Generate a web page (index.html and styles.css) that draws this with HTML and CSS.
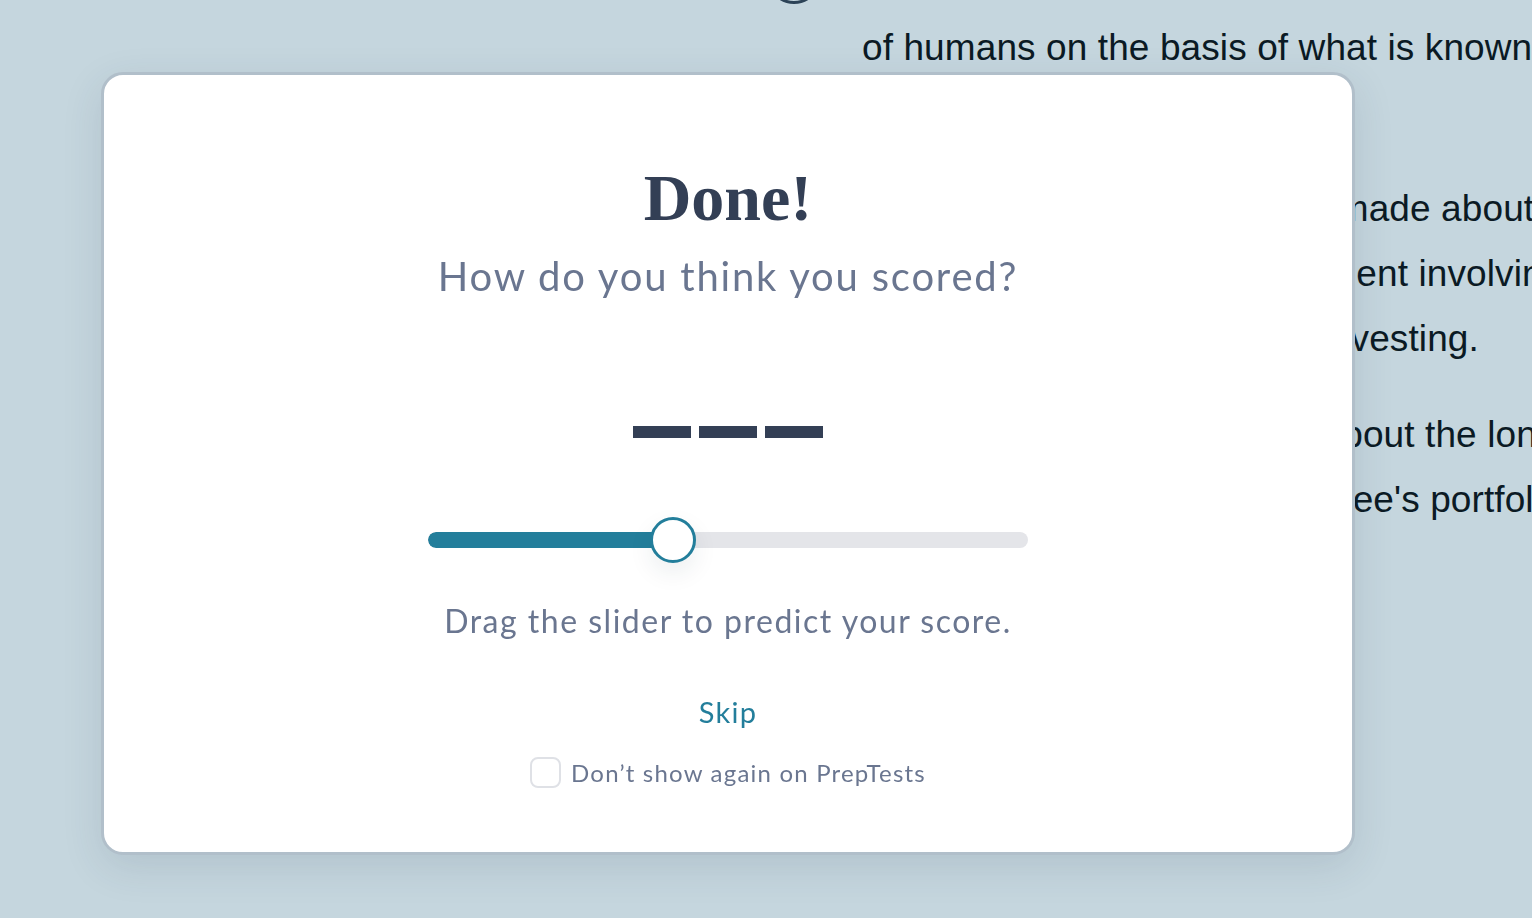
FILE: index.html
```html
<!DOCTYPE html>
<html lang="en">
<head>
<meta charset="utf-8">
<title>Done!</title>
<link rel="stylesheet" href="styles.css">
</head>
<body>
<div class="page">
  <div class="page-top"><span class="ring"></span></div>
  <div class="passage">
    <p class="para">
      <span class="line">of humans on the basis of what is known</span>
      <span class="line">at the time.</span>
    </p>
    <p class="para">
      <span class="line">Many predictions have been made about the</span>
      <span class="line">the outcome of a new investment involving</span>
      <span class="line">the risks that are present in investing.</span>
    </p>
    <p class="para">
      <span class="line">There is a lot of uncertainty about the long-term</span>
      <span class="line">and the return rate in the trustee's portfolio.</span>
    </p>
  </div>
</div>

<div class="overlay">
  <div class="modal">
    <h1 class="title">Done!</h1>
    <p class="subtitle">How do you think you scored?</p>
    <div class="score">
      <span class="dash"></span><span class="dash"></span><span class="dash"></span>
    </div>
    <div class="slider">
      <div class="track"><div class="fill" style="width:245px"></div></div>
      <div class="thumb" style="left:222px"></div>
    </div>
    <p class="hint">Drag the slider to predict your score.</p>
    <a class="skip" href="#">Skip</a>
    <label class="check">
      <span class="box"></span>
      <span class="check-label">Don’t show again on PrepTests</span>
    </label>
  </div>
</div>
</body>
</html>
```
FILE: styles.css
```css
* { box-sizing: border-box; }
html, body {
  margin: 0;
  height: 100%;
}
body {
  background: #c5d6de;
  overflow: hidden;
  font-family: "Liberation Sans", Arial, sans-serif;
}
.page {
  padding-left: 862px;
}
.page-top {
  height: 4px;
  display: flex;
  align-items: flex-end;
}
.ring {
  flex: none;
  display: block;
  width: 54px;
  height: 54px;
  margin-left: -95px;
  border: 3px solid #2c4357;
  border-radius: 50%;
}
.passage {
  padding-top: 11px;
  color: #0b1a24;
  font-size: 37px;
  line-height: 65px;
  letter-spacing: 0.1px;
  white-space: nowrap;
}
.para {
  margin: 0 0 31px;
}
.line {
  display: block;
}

.overlay {
  position: fixed;
  left: 101px;
  top: 72px;
}
.modal {
  width: 1254px;
  height: 783px;
  background: #fff;
  border: 3px solid #b1bfca;
  border-radius: 22px;
  box-shadow: 0 12px 40px rgba(40, 60, 80, 0.12);
  display: flex;
  flex-direction: column;
  align-items: center;
  padding-top: 90px;
}
.title {
  margin: 0;
  font-family: "Liberation Serif", "Times New Roman", serif;
  font-weight: 700;
  font-size: 66px;
  line-height: 66px;
  color: #333f55;
}
.subtitle {
  margin: 22px 0 0;
  font-family: Lato, "Open Sans", sans-serif;
  font-size: 40px;
  line-height: 46px;
  color: #6a7690;
  letter-spacing: 1.8px;
}
.score {
  display: flex;
  gap: 8px;
  margin-top: 127px;
}
.dash {
  display: block;
  width: 58px;
  height: 12px;
  background: #333f55;
}
.slider {
  position: relative;
  width: 600px;
  height: 46px;
  margin-top: 79px;
  display: flex;
  align-items: center;
}
.track {
  width: 100%;
  height: 16px;
  border-radius: 8px;
  background: #e4e5e9;
  overflow: hidden;
}
.fill {
  height: 100%;
  background: #237e9b;
  border-radius: 8px 0 0 8px;
}
.thumb {
  position: absolute;
  top: 0;
  width: 46px;
  height: 46px;
  border-radius: 50%;
  background: #fff;
  border: 3px solid #237e9b;
  box-shadow: 0 10px 24px rgba(30, 50, 70, 0.08);
}
.hint {
  margin: 38px 0 0;
  font-family: Lato, "Open Sans", sans-serif;
  font-size: 32px;
  line-height: 40px;
  color: #6a7690;
  letter-spacing: 1.5px;
}
.skip {
  margin-top: 54px;
  font-family: Lato, "Open Sans", sans-serif;
  font-size: 29px;
  line-height: 34px;
  color: #237e9b;
  text-decoration: none;
  letter-spacing: 1.3px;
}
.check {
  display: flex;
  align-items: center;
  gap: 10px;
  margin-top: 28px;
}
.box {
  width: 31px;
  height: 31px;
  border: 2px solid #dfe1e6;
  border-radius: 8px;
}
.check-label {
  font-family: Lato, "Open Sans", sans-serif;
  font-size: 24px;
  line-height: 31px;
  color: #6a7690;
  letter-spacing: 1.2px;
}
```
